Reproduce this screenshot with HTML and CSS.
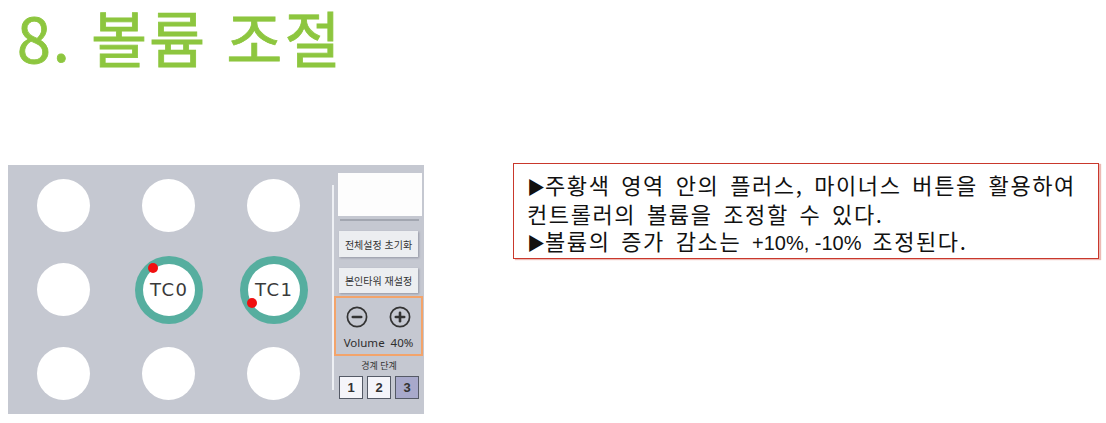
FILE: index.html
```html
<!DOCTYPE html>
<html lang="ko">
<head>
<meta charset="utf-8">
<link rel="stylesheet" href="styles.css">
</head>
<body>
<h1 class="title">8. 볼륨 조절</h1>
<div class="content">
  <div class="panel">
    <div class="grid">
      <div class="spot"></div>
      <div class="spot"></div>
      <div class="spot"></div>
      <div class="spot"></div>
      <div class="spot tc"><span class="tc-label">TC0</span><span class="dot dot-a"></span></div>
      <div class="spot tc"><span class="tc-label">TC1</span><span class="dot dot-b"></span></div>
      <div class="spot"></div>
      <div class="spot"></div>
      <div class="spot"></div>
    </div>
    <div class="divider"></div>
    <div class="sidebar">
      <div class="screen"></div>
      <div class="rule"></div>
      <div class="btn btn-first">전체설정 초기화</div>
      <div class="btn btn-second">본인타워 재설정</div>
      <div class="volume">
        <div class="vol-icons">
          <svg class="vol-icon" viewBox="0 0 22 22" width="22" height="22"><circle cx="11" cy="11" r="9.6" fill="none" stroke="#333" stroke-width="1.7"/><line x1="6.8" y1="11" x2="15.2" y2="11" stroke="#333" stroke-width="2.6" stroke-linecap="round"/></svg>
          <svg class="vol-icon" viewBox="0 0 22 22" width="22" height="22"><circle cx="11" cy="11" r="9.6" fill="none" stroke="#333" stroke-width="1.7"/><line x1="6.8" y1="11" x2="15.2" y2="11" stroke="#333" stroke-width="2.6" stroke-linecap="round"/><line x1="11" y1="6.8" x2="11" y2="15.2" stroke="#333" stroke-width="2.6" stroke-linecap="round"/></svg>
        </div>
        <div class="vol-text">Volume&nbsp; 40%</div>
      </div>
      <div class="level-label">경계 단계</div>
      <div class="levels">
        <div class="level">1</div>
        <div class="level">2</div>
        <div class="level level-on">3</div>
      </div>
    </div>
  </div>
  <div class="note">
    <p><span class="arrow">▶</span>주황색 영역 안의 플러스, 마이너스 버튼을 활용하여</p>
    <p>컨트롤러의 볼륨을 조정할 수 있다.</p>
    <p><span class="arrow">▶</span>볼륨의 증가 감소는 <span class="latin">+10%, -10%</span> 조정된다.</p>
  </div>
</div>
</body>
</html>
```

FILE: styles.css
```css
html, body {
  margin: 0;
  padding: 0;
  background: #ffffff;
}

body {
  width: 1106px;
  height: 423px;
  overflow: hidden;
  font-family: "Noto Sans CJK KR", "Noto Sans", sans-serif;
}

.title {
  margin: 0;
  padding: 2px 0 0 17px;
  height: 70px;
  font-size: 61px;
  line-height: 70px;
  font-weight: 400;
  color: #8dc63f;
  -webkit-text-stroke: 0.8px #8dc63f;
  letter-spacing: 2px;
}

.content {
  display: flex;
  align-items: flex-start;
  margin-top: 91px;
}

.panel {
  display: flex;
  align-items: flex-start;
  width: 416px;
  height: 249px;
  margin: 2px 0 0 8px;
  background: #c5c8d1;
  box-sizing: border-box;
}

.grid {
  display: grid;
  grid-template-columns: repeat(3, 53px);
  grid-auto-rows: 53px;
  column-gap: 52px;
  row-gap: 31px;
  padding: 14px 0 0 29px;
}

.spot {
  width: 53px;
  height: 53px;
  border-radius: 50%;
  background: #ffffff;
  position: relative;
}

.tc {
  width: 52px;
  height: 52px;
  margin: 0.5px;
  box-shadow: 0 0 0 8px #56ae9f;
  display: flex;
  align-items: center;
  justify-content: center;
}

.tc-label {
  font-family: "DejaVu Sans", sans-serif;
  font-size: 18px;
  color: #3a3a3a;
  letter-spacing: 1.5px;
  margin-left: 1.5px;
}

.dot {
  position: absolute;
  width: 10px;
  height: 10px;
  border-radius: 50%;
  background: #f01010;
}

.dot-a {
  left: 5px;
  top: -1px;
}

.dot-b {
  left: -1px;
  top: 34px;
}

.divider {
  width: 2px;
  height: 205px;
  margin: 20px 0 0 32px;
  background: #eef0f4;
}

.sidebar {
  display: flex;
  flex-direction: column;
  align-items: flex-start;
  width: 90px;
}

.screen {
  width: 84px;
  height: 43px;
  margin: 8px 0 0 4px;
  background: #fdfdfd;
}

.rule {
  width: 79px;
  height: 2px;
  margin: 3px 0 0 6px;
  background: #a2a6b0;
}

.btn {
  width: 79px;
  margin-left: 5px;
  background: #eceef1;
  box-shadow: 1px 1px 2px rgba(60, 60, 80, 0.35);
  font-size: 10px;
  color: #333;
  display: flex;
  align-items: center;
  justify-content: center;
}

.btn-first {
  height: 26px;
  margin-top: 10px;
}

.btn-second {
  height: 25px;
  margin-top: 11px;
}

.volume {
  width: 89px;
  height: 60px;
  margin-top: 3px;
  border: 2px solid #f3a46b;
  box-sizing: border-box;
  padding: 8px 0 0 10px;
}

.vol-icons {
  display: flex;
  gap: 21px;
}

.vol-icon {
  display: block;
}

.vol-text {
  margin: 8px 0 0 -10px;
  text-align: center;
  font-family: "Noto Sans", sans-serif;
  font-size: 11.5px;
  line-height: 14px;
  color: #2e2e2e;
}

.level-label {
  width: 90px;
  margin-top: 4px;
  text-align: center;
  font-size: 9px;
  line-height: 12px;
  color: #333;
}

.levels {
  display: flex;
  gap: 4px;
  margin: 4px 0 0 5px;
}

.level {
  width: 24px;
  height: 23px;
  box-sizing: border-box;
  border: 1.5px solid #555a66;
  background: #f5f5fa;
  font-family: "Liberation Sans", sans-serif;
  font-weight: 700;
  font-size: 13px;
  color: #333;
  display: flex;
  align-items: center;
  justify-content: center;
}

.level-on {
  background: #a8a9cb;
}

.note {
  width: 586px;
  height: 96px;
  margin-left: 89px;
  box-sizing: border-box;
  border: 1px solid #c9382c;
  box-shadow: 2px 1px 1px rgba(201, 56, 44, 0.35);
  padding: 7px 0 0 13px;
}

.note p {
  margin: 0;
  font-size: 22px;
  line-height: 27px;
  color: #111;
  white-space: nowrap;
  letter-spacing: 1.6px;
  word-spacing: 3px;
}

.arrow {
  font-size: 18px;
  letter-spacing: 0;
}

.latin {
  font-family: "Liberation Sans", sans-serif;
  font-size: 20px;
  letter-spacing: 0;
  word-spacing: 0;
}
```
